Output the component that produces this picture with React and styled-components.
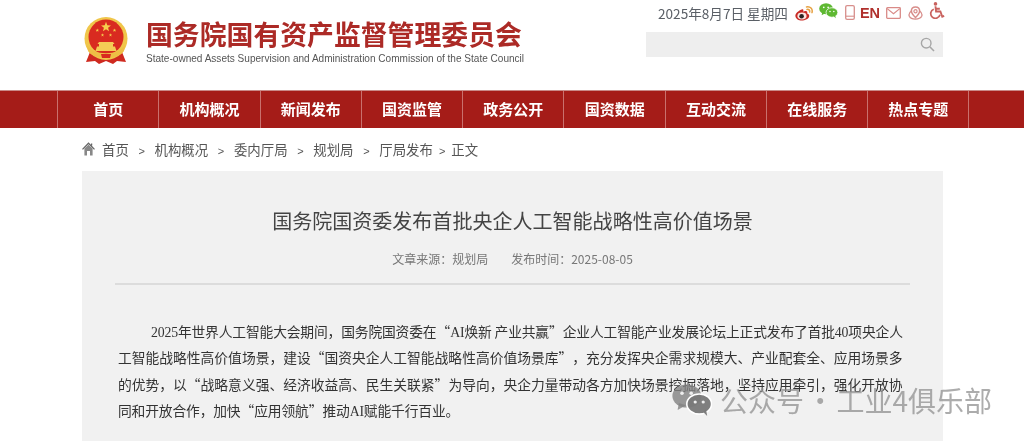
import styled, { createGlobalStyle } from "styled-components";

const GlobalStyle = createGlobalStyle`
  html, body {
    margin: 0;
    padding: 0;
    background: #fff;
  }
  body {
    font-family: "Noto Sans CJK SC", "Liberation Sans", sans-serif;
  }
`;

const navItems = ["首页", "机构概况", "新闻发布", "国资监管", "政务公开", "国资数据", "互动交流", "在线服务", "热点专题"];
const crumbs = ["首页", "机构概况", "委内厅局", "规划局", "厅局发布"];

const Page = styled.div`
  position: relative;
  width: 1024px;
  height: 441px;
  overflow: hidden;
  filter: blur(0.35px);
`;

const Header = styled.header`
  height: 90px;
  box-sizing: border-box;
  padding: 0 81px 0 83px;
  display: flex;
  justify-content: space-between;
`;

const Brand = styled.div`
  display: flex;
  align-items: flex-start;
  gap: 17px;
  padding-top: 17px;
`;

const BrandText = styled.div`
  display: flex;
  flex-direction: column;
  margin-top: -1px;
`;

const BrandTitle = styled.div`
  font-size: 26.85px;
  line-height: 36px;
  font-weight: 700;
  color: #ac2a26;
  white-space: nowrap;
`;

const BrandSub = styled.div`
  font-family: "Liberation Sans", sans-serif;
  font-size: 10.05px;
  line-height: 12px;
  margin-top: 1px;
  color: #555;
  white-space: nowrap;
`;

const Tools = styled.div`
  width: 297px;
  display: flex;
  flex-direction: column;
  align-items: stretch;
`;

const ToolRow = styled.div`
  display: flex;
  align-items: center;
  height: 32px;
  box-sizing: border-box;
  padding: 0 0 7px 12px;
  white-space: nowrap;
`;

const DateText = styled.span`
  font-size: 13.6px;
  color: #5a5f66;
  margin-right: 7px;
`;

const EnLabel = styled.span`
  font-family: "Liberation Sans", sans-serif;
  font-weight: 700;
  font-size: 14.5px;
  color: #b0302c;
  margin-right: 6px;
`;

const IconSlot = styled.span`
  display: flex;
  margin-right: ${(p) => p.$gap}px;
  margin-top: ${(p) => p.$shift || 0}px;
`;

const SearchBar = styled.div`
  height: 25px;
  background: #eeeeee;
  display: flex;
  align-items: center;
  justify-content: flex-end;
  padding-right: 8px;
`;

const Nav = styled.nav`
  height: 38px;
  box-sizing: border-box;
  background: #a51c18;
  border-top: 1px solid #c98a88;
  padding-left: 57px;
  display: flex;
`;

const NavItem = styled.div`
  width: 101.3px;
  box-sizing: border-box;
  border-left: 1px solid #c9706d;
  padding-bottom: 2px;
  display: flex;
  align-items: center;
  justify-content: center;
  font-size: 15px;
  font-weight: 700;
  color: #fff;

  &:last-child {
    width: 102px;
    border-right: 1px solid #c9706d;
  }
`;

const Breadcrumb = styled.div`
  height: 43px;
  box-sizing: border-box;
  padding: 0 0 2px 82px;
  display: flex;
  align-items: center;
  font-size: 13.4px;
  color: #555;
`;

const CrumbSep = styled.span`
  font-family: "Liberation Sans", sans-serif;
  font-size: 11px;
  margin: 0 ${(p) => (p.$tight ? 6 : 9.7)}px;
`;

const HomeIcon = styled.svg`
  margin-right: 7px;
`;

const Panel = styled.main`
  margin: 0 81px 0 82px;
  height: 300px;
  background: #f1f1f1;
  padding: 0 33px;
`;

const ArticleTitle = styled.h1`
  margin: 0;
  padding-top: 36px;
  font-size: 20.05px;
  line-height: 28px;
  font-weight: 400;
  color: #444;
  text-align: center;
  white-space: nowrap;
`;

const Meta = styled.div`
  margin-top: 15px;
  height: 34px;
  display: flex;
  justify-content: center;
  gap: 23px;
  font-size: 12px;
  line-height: 18px;
  color: #777;
`;

const Rule = styled.div`
  height: 2px;
  background: #dcdcdc;
  margin-top: -1px;
`;

const Body = styled.div`
  margin: 33px 0 0 3px;
  font-size: 13.77px;
  line-height: 26.3px;
  color: #333;
`;

const BodyLine = styled.div`
  height: 26.3px;
  white-space: nowrap;
  padding-left: ${(p) => (p.$indent ? 33 : 0)}px;
  letter-spacing: ${(p) => (p.$tight ? -0.16 : 0)}px;
`;

const Latin = styled.span`
  font-family: "Liberation Serif", serif;
  line-height: 1;
`;

const Quote = styled.span`
  display: inline-block;
  width: 1em;
  line-height: 1;
  text-align: ${(p) => (p.$close ? "left" : "right")};
`;

const Watermark = styled.div`
  position: absolute;
  left: 672px;
  top: 382px;
  display: flex;
  align-items: center;
  gap: 8px;
  color: rgba(140, 140, 140, 0.72);
  font-size: 28px;
  line-height: 36px;
  word-spacing: -4px;
  white-space: nowrap;
`;

// five pointed star around cx, cy
const starPoints = (cx, cy, r) => {
  const pts = [];
  for (let i = 0; i < 10; i++) {
    const rad = i % 2 === 0 ? r : r * 0.42;
    const a = (Math.PI / 5) * i - Math.PI / 2;
    pts.push(`${(cx + rad * Math.cos(a)).toFixed(2)},${(cy + rad * Math.sin(a)).toFixed(2)}`);
  }
  return pts.join(" ");
};

const Emblem = () => (
  <svg width="46" height="48" viewBox="0 0 46 48">
    <path d="M7 35 L3 45 L12 44 L16 47 L23 44 L30 47 L34 44 L43 45 L39 35 Z" fill="#cf2a20" />
    <circle cx="23" cy="21.5" r="21.5" fill="#f0c64a" />
    <circle cx="23" cy="20" r="17.5" fill="#d92b20" />
    <polygon points={starPoints(23, 10, 5.2)} fill="#f6d04d" />
    <polygon points={starPoints(14.3, 13.3, 1.9)} fill="#f6d04d" />
    <polygon points={starPoints(31.5, 13.3, 1.9)} fill="#f6d04d" />
    <polygon points={starPoints(19.5, 18, 1.7)} fill="#f6d04d" />
    <polygon points={starPoints(27.5, 18, 1.7)} fill="#f6d04d" />
    <path d="M16 25 H30 L31.5 27 H30 V29.5 H32 L33.5 34 H12.5 L14 29.5 H16 V27 H14.5 Z" fill="#f4cc55" />
    <path d="M4 28 C9 39 37 39 42 28 L41 34 C36 43 10 43 5 34 Z" fill="#eebf45" />
    <path d="M18 37 H28 L27 41 H19 Z" fill="#d92b20" />
  </svg>
);

const Weibo = () => (
  <svg width="18" height="15" viewBox="0 0 18 15" style={{ marginTop: 1 }}>
    <path d="M7.4 3.2 C3.2 4.6 0 7.6 0.4 10.2 C0.9 13.4 4.4 14.8 7.8 14.4 C11.8 14 14.6 11.6 14.2 9.4 C14 8.3 12.8 8 12.2 7.6 C12.6 6.2 12.2 5 10.8 5 C9.8 5 8.8 5.6 8.2 5.6 C8.5 4.2 8.6 2.9 7.4 3.2 Z" fill="#c92a24" />
    <ellipse cx="7" cy="10" rx="4.6" ry="3.4" fill="#fbe3df" />
    <circle cx="6.6" cy="10.2" r="2.3" fill="#2b2222" />
    <path d="M11.5 0.9 C15.2 0.2 18 2.8 17 6.6 M12 3.4 C13.8 3 15 4.2 14.6 6" fill="none" stroke="#e6a040" strokeWidth="1.5" strokeLinecap="round" />
  </svg>
);

const WeChat = ({ size = 19, main = "#5eb832", second = "#5eb832", eye = "#fff" }) => (
  <svg width={size} height={size * 0.8} viewBox="0 0 20 16">
    <ellipse cx="7.4" cy="6" rx="7.2" ry="5.8" fill={main} />
    <path d="M3.4 9.5 L2.8 13 L7 10.6 Z" fill={main} />
    <ellipse cx="13.6" cy="10" rx="6.2" ry="5" fill={second} stroke="#fff" strokeWidth="0.8" />
    <path d="M15.6 14 L17.6 16 L17 12.6 Z" fill={second} />
    <circle cx="5" cy="4.6" r="0.9" fill={eye} />
    <circle cx="9.6" cy="4.6" r="0.9" fill={eye} />
    <circle cx="11.6" cy="9" r="0.8" fill={eye} />
    <circle cx="15.6" cy="9" r="0.8" fill={eye} />
  </svg>
);

const Phone = () => (
  <svg width="10" height="15" viewBox="0 0 10 15">
    <rect x="0.7" y="0.7" width="8.6" height="13.6" rx="1.4" fill="none" stroke="#d88f8c" strokeWidth="1.3" />
    <path d="M1 11.2 H9" stroke="#d88f8c" strokeWidth="1.1" />
  </svg>
);

const Mail = () => (
  <svg width="15" height="12" viewBox="0 0 15 12">
    <rect x="0.7" y="0.7" width="13.6" height="10.6" rx="0.8" fill="none" stroke="#d98a87" strokeWidth="1.3" />
    <path d="M1.2 1.6 L7.5 6.8 L13.8 1.6" fill="none" stroke="#d98a87" strokeWidth="1.2" />
  </svg>
);

const MapPin = () => (
  <svg width="15" height="14" viewBox="0 0 16 15">
    <path d="M8 1.2 C5 1.2 3.6 3.4 3.6 5.4 C3.6 8 6.6 11 8 12.4 C9.4 11 12.4 8 12.4 5.4 C12.4 3.4 11 1.2 8 1.2 Z" fill="none" stroke="#d88e8b" strokeWidth="1.6" />
    <circle cx="8" cy="5.6" r="1.7" fill="none" stroke="#d88e8b" strokeWidth="1.3" />
    <path d="M3.8 5 C1.6 6.6 0.6 9 1.4 11 C2.6 13.6 5.4 14 8 14 C11 14 13.4 13.4 14.6 11 C15.4 9 14.4 6.6 12.2 5" fill="none" stroke="#d88e8b" strokeWidth="1.4" />
  </svg>
);

const Accessible = () => (
  <svg width="16" height="17" viewBox="0 0 16 18">
    <circle cx="6.4" cy="2" r="1.9" fill="#c9625e" />
    <path d="M6.4 4.5 L7 10 H11.6 L13.6 15.6 L15.6 14.8 M6.6 7.2 H11" fill="none" stroke="#c9625e" strokeWidth="2" />
    <path d="M4.6 7.6 A5 5 0 1 0 11.2 13.6" fill="none" stroke="#c9625e" strokeWidth="1.8" />
  </svg>
);

const SearchIcon = () => (
  <svg width="15" height="15" viewBox="0 0 15 15">
    <circle cx="6.2" cy="6.2" r="4.8" fill="none" stroke="#a6a6a6" strokeWidth="1.4" />
    <path d="M9.8 9.8 L14 14" stroke="#a6a6a6" strokeWidth="1.6" />
  </svg>
);

const App = () => {
  return (
    <Page>
      <GlobalStyle />
      <Header>
        <Brand>
          <Emblem />
          <BrandText>
            <BrandTitle>国务院国有资产监督管理委员会</BrandTitle>
            <BrandSub>State-owned Assets Supervision and Administration Commission of the State Council</BrandSub>
          </BrandText>
        </Brand>
        <Tools>
          <ToolRow>
            <DateText>2025年8月7日 星期四</DateText>
            <IconSlot $gap={6}><Weibo /></IconSlot>
            <IconSlot $gap={7} $shift={-3}><WeChat /></IconSlot>
            <IconSlot $gap={5}><Phone /></IconSlot>
            <EnLabel>EN</EnLabel>
            <IconSlot $gap={7}><Mail /></IconSlot>
            <IconSlot $gap={6}><MapPin /></IconSlot>
            <IconSlot $gap={0} $shift={-5}><Accessible /></IconSlot>
          </ToolRow>
          <SearchBar><SearchIcon /></SearchBar>
        </Tools>
      </Header>

      <Nav>
        {navItems.map((item) => (
          <NavItem key={item}>{item}</NavItem>
        ))}
      </Nav>

      <Breadcrumb>
        <HomeIcon width="13" height="14" viewBox="0 0 13 14">
          <path d="M0.5 7.4 L6.5 1.2 L12.5 7.4 M9.6 3.4 V1.4" fill="none" stroke="#666" strokeWidth="1.3" />
          <path d="M2.4 6.6 V13.6 H5 V9 H8 V13.6 H10.6 V6.6 L6.5 2.8 Z" fill="#888" />
        </HomeIcon>
        {crumbs.map((c, i) => (
          <span key={c}>
            {c}
            <CrumbSep $tight={i === crumbs.length - 1}>&gt;</CrumbSep>
          </span>
        ))}
        <span>正文</span>
      </Breadcrumb>

      <Panel>
        <ArticleTitle>国务院国资委发布首批央企人工智能战略性高价值场景</ArticleTitle>
        <Meta>
          <span>文章来源：规划局</span>
          <span>发布时间：2025-08-05</span>
        </Meta>
        <Rule />
        <Body>
          <BodyLine $indent $tight>
            <Latin>2025</Latin>年世界人工智能大会期间，国务院国资委在<Quote>“</Quote><Latin>AI</Latin>焕新 产业共赢<Quote $close>”</Quote>企业人工智能产业发展论坛上正式发布了首批<Latin>40</Latin>项央企人
          </BodyLine>
          <BodyLine>
            工智能战略性高价值场景，建设<Quote>“</Quote>国资央企人工智能战略性高价值场景库<Quote $close>”</Quote>，充分发挥央企需求规模大、产业配套全、应用场景多
          </BodyLine>
          <BodyLine>
            的优势，以<Quote>“</Quote>战略意义强、经济收益高、民生关联紧<Quote $close>”</Quote>为导向，央企力量带动各方加快场景挖掘落地，坚持应用牵引，强化开放协
          </BodyLine>
          <BodyLine $tight>
            同和开放合作，加快<Quote>“</Quote>应用领航<Quote $close>”</Quote>推动<Latin>AI</Latin>赋能千行百业。
          </BodyLine>
        </Body>
      </Panel>

      <Watermark>
        <WeChat size={40} main="rgba(130,130,130,0.8)" second="rgba(120,120,120,0.95)" eye="#eee" />
        <span>公众号 · 工业4俱乐部</span>
      </Watermark>
    </Page>
  );
};

export default App;
